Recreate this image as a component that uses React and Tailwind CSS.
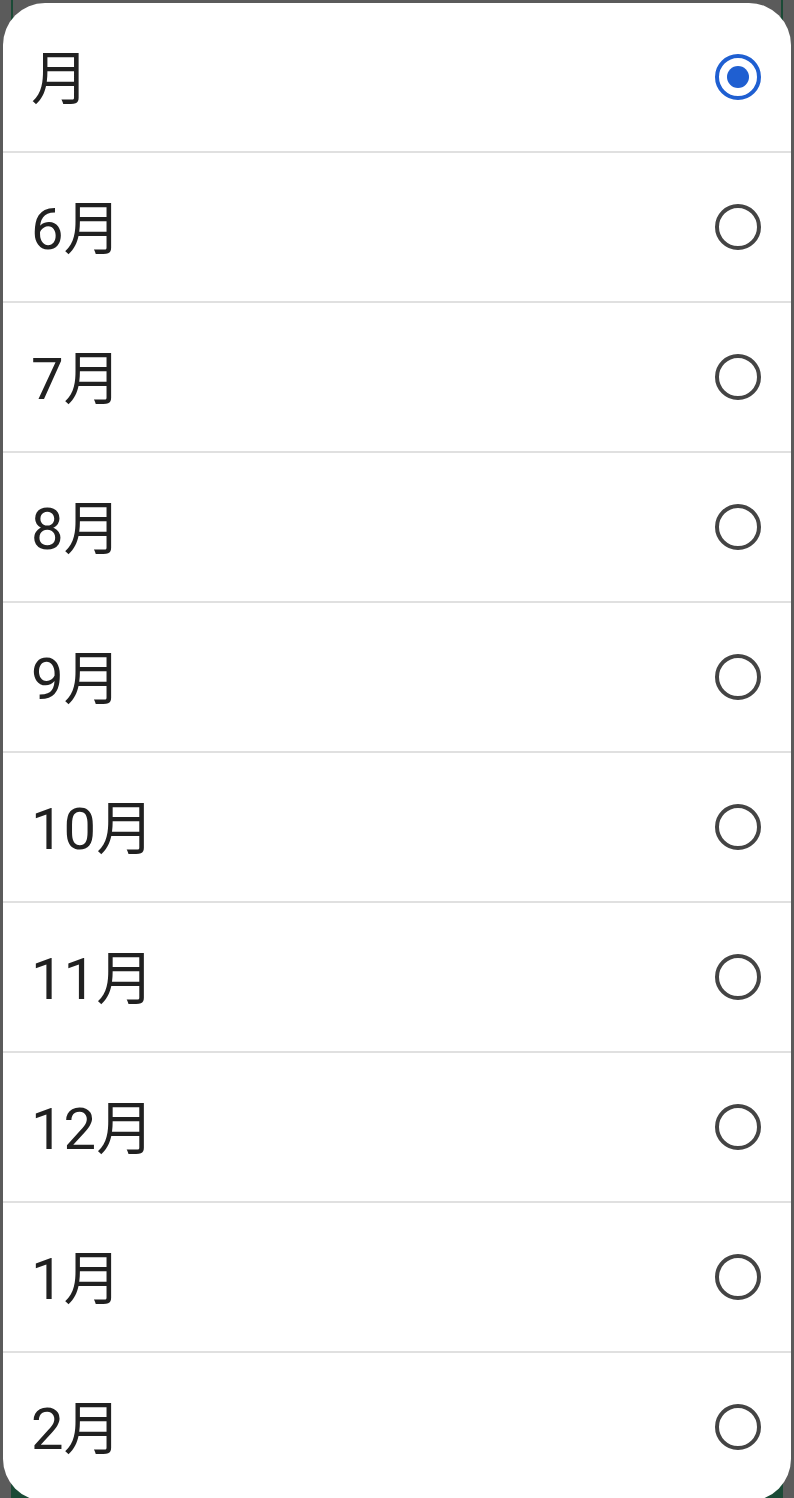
import { useState } from "react";

const OPTIONS = ["月", "6月", "7月", "8月", "9月", "10月", "11月", "12月", "1月", "2月"];

function Radio({ checked }) {
  return (
    <svg width="50" height="50" viewBox="0 0 50 50" className="shrink-0">
      <circle cx="25" cy="25" r="21" fill="none" stroke={checked ? "#1f5fd1" : "#444444"} strokeWidth="4" />
      {checked && <circle cx="25" cy="25" r="11" fill="#1f5fd1" />}
    </svg>
  );
}

export default function App() {
  const [selected, setSelected] = useState(0);

  return (
    <div className="relative h-[1498px] w-[794px] overflow-hidden bg-[#5b5b5b]">
      {/* dimmed app behind the dialog */}
      <div className="absolute inset-y-0 left-[11px] right-[11px] flex flex-col border-x-2 border-[#1b4a36]">
        <div className="flex-1" />
        <div className="h-[60px] bg-[#1b4a36]" />
      </div>

      <div className="relative ml-[3px] mt-[3px] w-[788px] overflow-hidden rounded-[42px] bg-white">
        {OPTIONS.map((label, i) => (
          <button
            key={label}
            onClick={() => setSelected(i)}
            className={`flex w-full items-center justify-between pl-[28px] pr-[28px] text-left ${i === 0 ? "h-[148px]" : "h-[150px] border-t-2 border-[#e0e0e0]"}`}
          >
            <span className="pt-[4px] text-[58px] leading-none text-[#212121] [font-family:Roboto,'Noto_Sans_CJK_JP',sans-serif]">{label}</span>
            <Radio checked={selected === i} />
          </button>
        ))}
      </div>
    </div>
  );
}
